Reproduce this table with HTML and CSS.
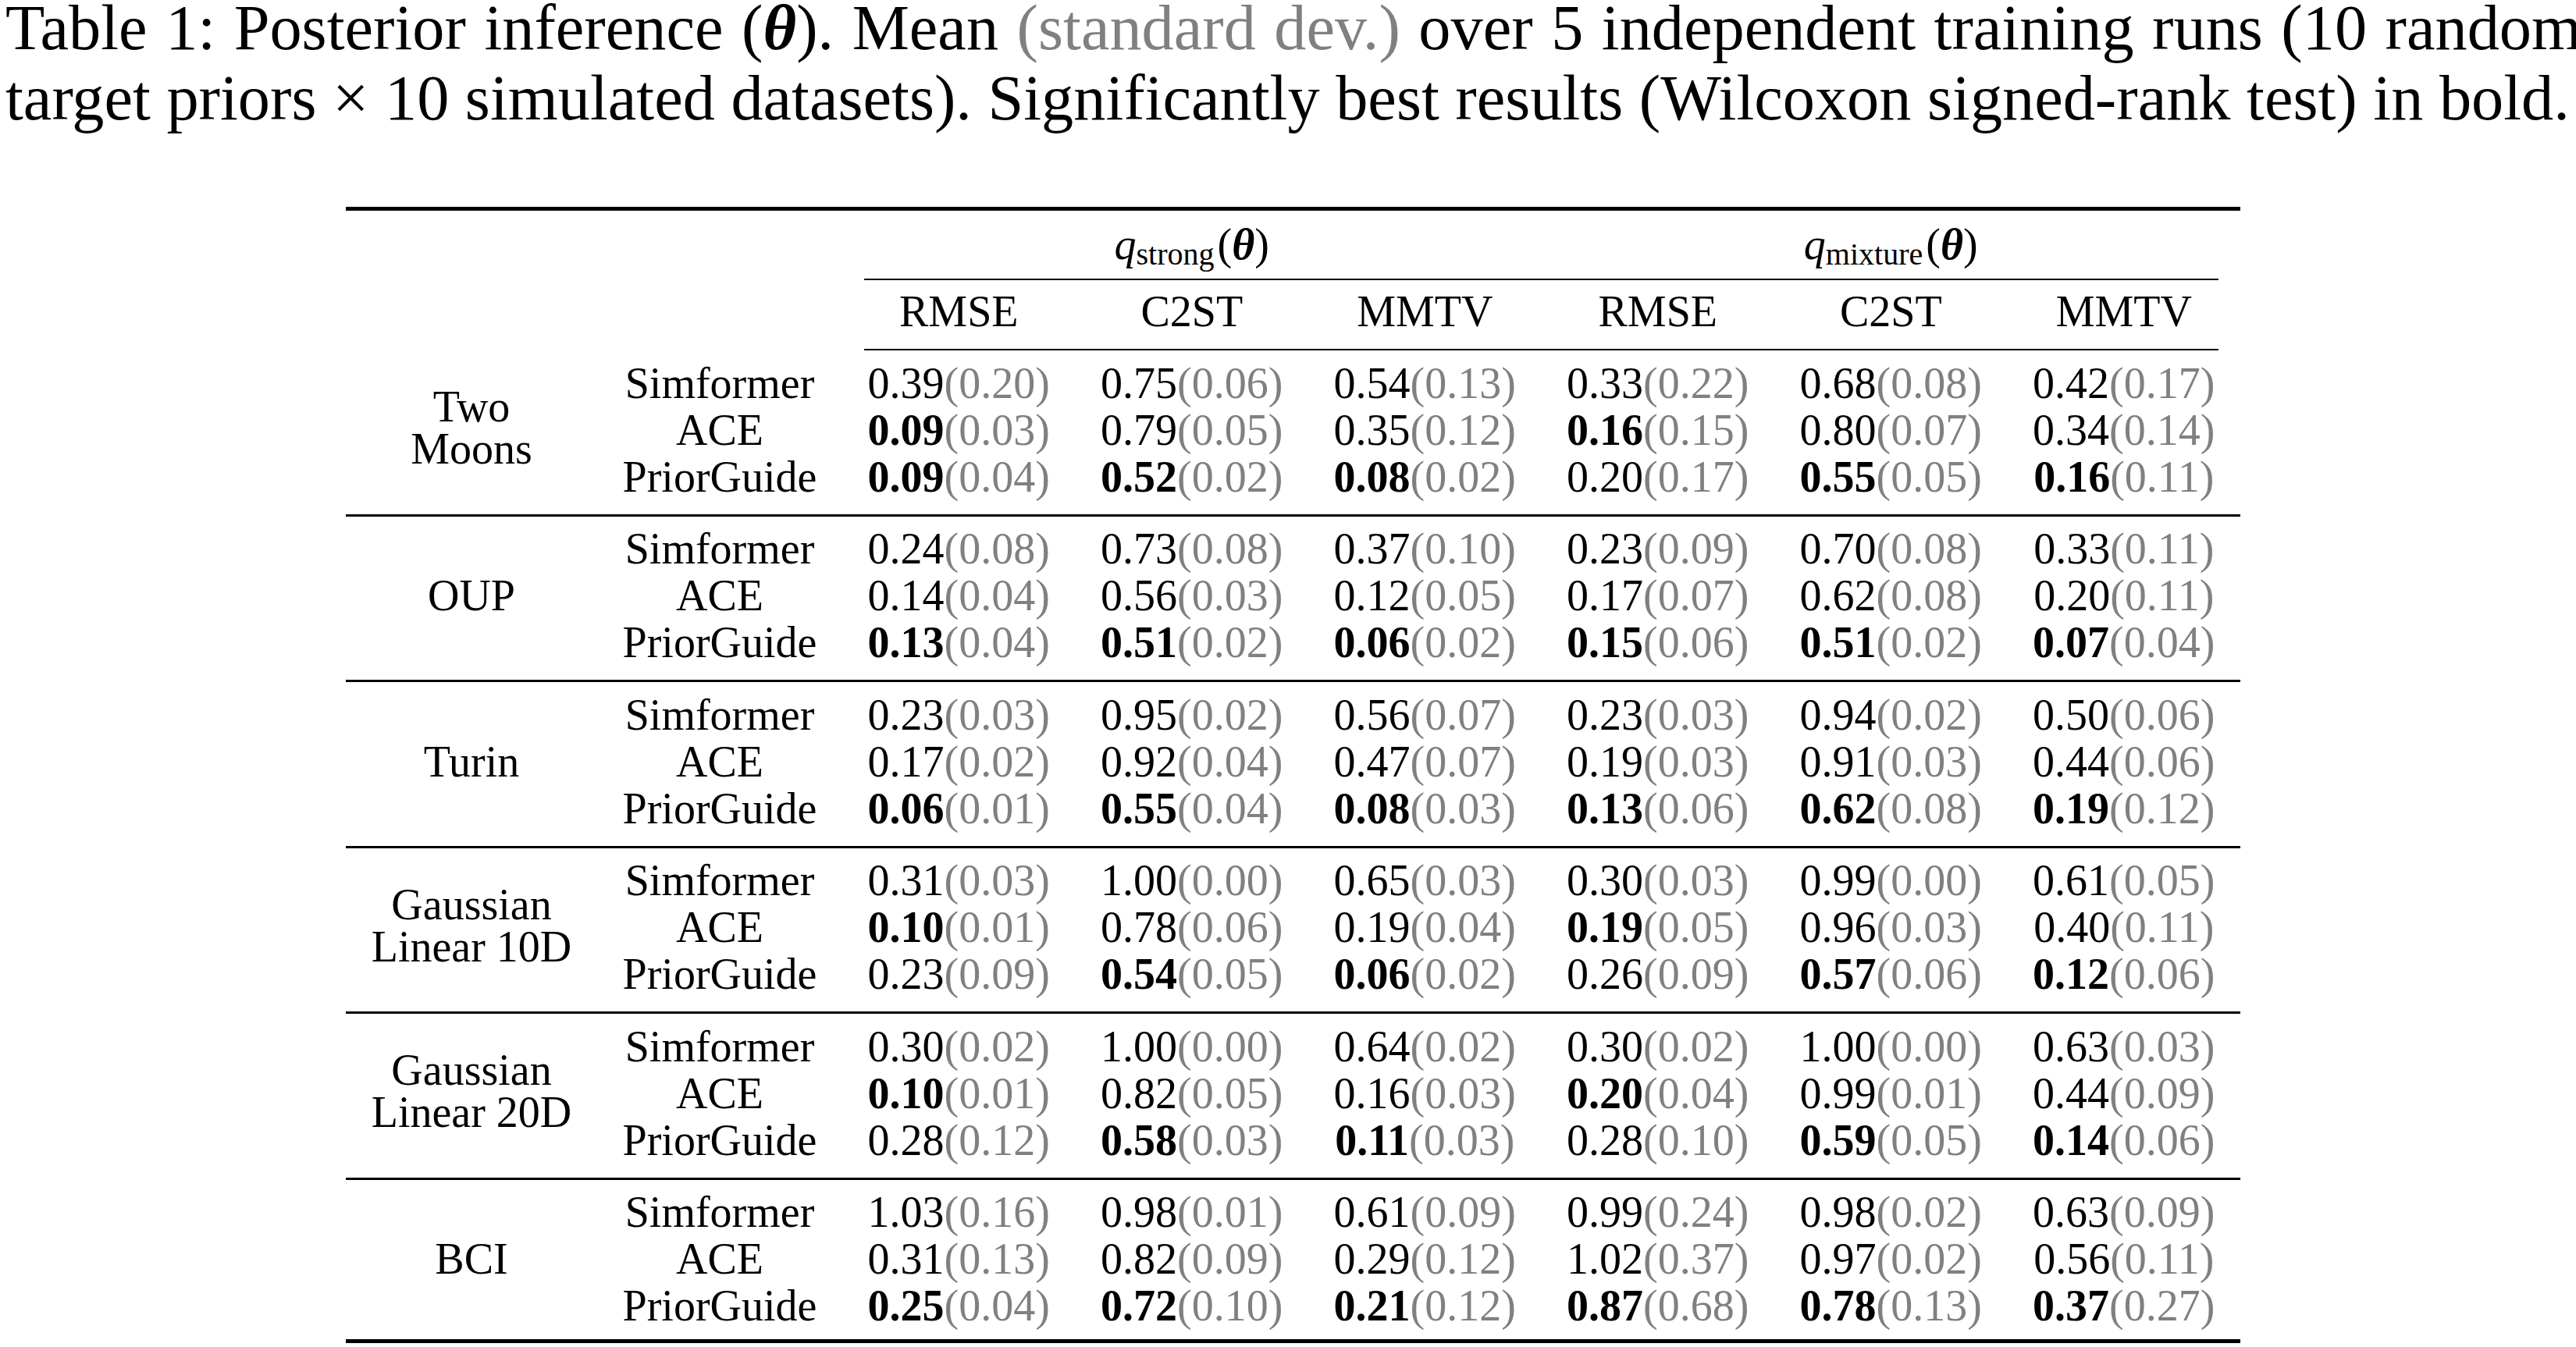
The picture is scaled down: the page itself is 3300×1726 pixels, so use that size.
FILE: index.html
```html
<!DOCTYPE html>
<html lang="en">
<head>
<meta charset="utf-8">
<title>Table 1: Posterior inference</title>
<link rel="stylesheet" href="styles.css">
</head>
<body>
<div class="caption">
  <div class="cap-line cap-first">Table 1: Posterior inference (<b class="theta">θ</b>). Mean <span class="sd">(standard dev.)</span> over 5 independent training runs (10 random</div>
  <div class="cap-line cap-second">target priors × 10 simulated datasets). Significantly best results (Wilcoxon signed-rank test) in bold.</div>
</div>

<div class="results">
  <div class="head">
    <div class="h1 blank"></div>
    <div class="h1 group g1"><i class="q">q</i><span class="sub">strong</span>(<b class="theta">θ</b>)</div>
    <div class="h1 group g2"><i class="q">q</i><span class="sub">mixture</span>(<b class="theta">θ</b>)</div>
    <div class="cmid"></div>
    <div class="h2 blank"></div>
    <div class="h2">RMSE</div><div class="h2">C2ST</div><div class="h2">MMTV</div>
    <div class="h2">RMSE</div><div class="h2">C2ST</div><div class="h2">MMTV</div>
    <div class="cmid"></div>
  </div>

  <div class="section first">
    <div class="label two-line">Two<br>Moons</div>
    <div class="m">Simformer</div>
    <div class="c">0.39<span class="sd">(0.20)</span></div><div class="c">0.75<span class="sd">(0.06)</span></div><div class="c">0.54<span class="sd">(0.13)</span></div><div class="c">0.33<span class="sd">(0.22)</span></div><div class="c">0.68<span class="sd">(0.08)</span></div><div class="c">0.42<span class="sd">(0.17)</span></div>
    <div class="m">ACE</div>
    <div class="c"><b>0.09</b><span class="sd">(0.03)</span></div><div class="c">0.79<span class="sd">(0.05)</span></div><div class="c">0.35<span class="sd">(0.12)</span></div><div class="c"><b>0.16</b><span class="sd">(0.15)</span></div><div class="c">0.80<span class="sd">(0.07)</span></div><div class="c">0.34<span class="sd">(0.14)</span></div>
    <div class="m">PriorGuide</div>
    <div class="c"><b>0.09</b><span class="sd">(0.04)</span></div><div class="c"><b>0.52</b><span class="sd">(0.02)</span></div><div class="c"><b>0.08</b><span class="sd">(0.02)</span></div><div class="c">0.20<span class="sd">(0.17)</span></div><div class="c"><b>0.55</b><span class="sd">(0.05)</span></div><div class="c"><b>0.16</b><span class="sd">(0.11)</span></div>
  </div>

  <div class="section">
    <div class="label">OUP</div>
    <div class="m">Simformer</div>
    <div class="c">0.24<span class="sd">(0.08)</span></div><div class="c">0.73<span class="sd">(0.08)</span></div><div class="c">0.37<span class="sd">(0.10)</span></div><div class="c">0.23<span class="sd">(0.09)</span></div><div class="c">0.70<span class="sd">(0.08)</span></div><div class="c">0.33<span class="sd">(0.11)</span></div>
    <div class="m">ACE</div>
    <div class="c">0.14<span class="sd">(0.04)</span></div><div class="c">0.56<span class="sd">(0.03)</span></div><div class="c">0.12<span class="sd">(0.05)</span></div><div class="c">0.17<span class="sd">(0.07)</span></div><div class="c">0.62<span class="sd">(0.08)</span></div><div class="c">0.20<span class="sd">(0.11)</span></div>
    <div class="m">PriorGuide</div>
    <div class="c"><b>0.13</b><span class="sd">(0.04)</span></div><div class="c"><b>0.51</b><span class="sd">(0.02)</span></div><div class="c"><b>0.06</b><span class="sd">(0.02)</span></div><div class="c"><b>0.15</b><span class="sd">(0.06)</span></div><div class="c"><b>0.51</b><span class="sd">(0.02)</span></div><div class="c"><b>0.07</b><span class="sd">(0.04)</span></div>
  </div>

  <div class="section">
    <div class="label">Turin</div>
    <div class="m">Simformer</div>
    <div class="c">0.23<span class="sd">(0.03)</span></div><div class="c">0.95<span class="sd">(0.02)</span></div><div class="c">0.56<span class="sd">(0.07)</span></div><div class="c">0.23<span class="sd">(0.03)</span></div><div class="c">0.94<span class="sd">(0.02)</span></div><div class="c">0.50<span class="sd">(0.06)</span></div>
    <div class="m">ACE</div>
    <div class="c">0.17<span class="sd">(0.02)</span></div><div class="c">0.92<span class="sd">(0.04)</span></div><div class="c">0.47<span class="sd">(0.07)</span></div><div class="c">0.19<span class="sd">(0.03)</span></div><div class="c">0.91<span class="sd">(0.03)</span></div><div class="c">0.44<span class="sd">(0.06)</span></div>
    <div class="m">PriorGuide</div>
    <div class="c"><b>0.06</b><span class="sd">(0.01)</span></div><div class="c"><b>0.55</b><span class="sd">(0.04)</span></div><div class="c"><b>0.08</b><span class="sd">(0.03)</span></div><div class="c"><b>0.13</b><span class="sd">(0.06)</span></div><div class="c"><b>0.62</b><span class="sd">(0.08)</span></div><div class="c"><b>0.19</b><span class="sd">(0.12)</span></div>
  </div>

  <div class="section">
    <div class="label two-line">Gaussian<br>Linear 10D</div>
    <div class="m">Simformer</div>
    <div class="c">0.31<span class="sd">(0.03)</span></div><div class="c">1.00<span class="sd">(0.00)</span></div><div class="c">0.65<span class="sd">(0.03)</span></div><div class="c">0.30<span class="sd">(0.03)</span></div><div class="c">0.99<span class="sd">(0.00)</span></div><div class="c">0.61<span class="sd">(0.05)</span></div>
    <div class="m">ACE</div>
    <div class="c"><b>0.10</b><span class="sd">(0.01)</span></div><div class="c">0.78<span class="sd">(0.06)</span></div><div class="c">0.19<span class="sd">(0.04)</span></div><div class="c"><b>0.19</b><span class="sd">(0.05)</span></div><div class="c">0.96<span class="sd">(0.03)</span></div><div class="c">0.40<span class="sd">(0.11)</span></div>
    <div class="m">PriorGuide</div>
    <div class="c">0.23<span class="sd">(0.09)</span></div><div class="c"><b>0.54</b><span class="sd">(0.05)</span></div><div class="c"><b>0.06</b><span class="sd">(0.02)</span></div><div class="c">0.26<span class="sd">(0.09)</span></div><div class="c"><b>0.57</b><span class="sd">(0.06)</span></div><div class="c"><b>0.12</b><span class="sd">(0.06)</span></div>
  </div>

  <div class="section">
    <div class="label two-line">Gaussian<br>Linear 20D</div>
    <div class="m">Simformer</div>
    <div class="c">0.30<span class="sd">(0.02)</span></div><div class="c">1.00<span class="sd">(0.00)</span></div><div class="c">0.64<span class="sd">(0.02)</span></div><div class="c">0.30<span class="sd">(0.02)</span></div><div class="c">1.00<span class="sd">(0.00)</span></div><div class="c">0.63<span class="sd">(0.03)</span></div>
    <div class="m">ACE</div>
    <div class="c"><b>0.10</b><span class="sd">(0.01)</span></div><div class="c">0.82<span class="sd">(0.05)</span></div><div class="c">0.16<span class="sd">(0.03)</span></div><div class="c"><b>0.20</b><span class="sd">(0.04)</span></div><div class="c">0.99<span class="sd">(0.01)</span></div><div class="c">0.44<span class="sd">(0.09)</span></div>
    <div class="m">PriorGuide</div>
    <div class="c">0.28<span class="sd">(0.12)</span></div><div class="c"><b>0.58</b><span class="sd">(0.03)</span></div><div class="c"><b>0.11</b><span class="sd">(0.03)</span></div><div class="c">0.28<span class="sd">(0.10)</span></div><div class="c"><b>0.59</b><span class="sd">(0.05)</span></div><div class="c"><b>0.14</b><span class="sd">(0.06)</span></div>
  </div>

  <div class="section last">
    <div class="label">BCI</div>
    <div class="m">Simformer</div>
    <div class="c">1.03<span class="sd">(0.16)</span></div><div class="c">0.98<span class="sd">(0.01)</span></div><div class="c">0.61<span class="sd">(0.09)</span></div><div class="c">0.99<span class="sd">(0.24)</span></div><div class="c">0.98<span class="sd">(0.02)</span></div><div class="c">0.63<span class="sd">(0.09)</span></div>
    <div class="m">ACE</div>
    <div class="c">0.31<span class="sd">(0.13)</span></div><div class="c">0.82<span class="sd">(0.09)</span></div><div class="c">0.29<span class="sd">(0.12)</span></div><div class="c">1.02<span class="sd">(0.37)</span></div><div class="c">0.97<span class="sd">(0.02)</span></div><div class="c">0.56<span class="sd">(0.11)</span></div>
    <div class="m">PriorGuide</div>
    <div class="c"><b>0.25</b><span class="sd">(0.04)</span></div><div class="c"><b>0.72</b><span class="sd">(0.10)</span></div><div class="c"><b>0.21</b><span class="sd">(0.12)</span></div><div class="c"><b>0.87</b><span class="sd">(0.68)</span></div><div class="c"><b>0.78</b><span class="sd">(0.13)</span></div><div class="c"><b>0.37</b><span class="sd">(0.27)</span></div>
  </div>
</div>
</body>
</html>
```

FILE: styles.css
```css
html, body {
  margin: 0;
  padding: 0;
  background: #ffffff;
  overflow: hidden;
}

body {
  font-family: "Liberation Serif", "Times New Roman", serif;
  color: #000000;
}

.sd {
  color: #808080;
}

.theta {
  font-style: italic;
  font-weight: bold;
}

/* ---------- caption ---------- */
.caption {
  padding-left: 7px;
  width: 3300px;
  font-size: 82.3px;
  white-space: nowrap;
}

.cap-first {
  line-height: 71px;
  white-space: normal;
  text-align: justify;
  text-align-last: justify;
}

.cap-second {
  line-height: 109px;
}

/* ---------- table ---------- */
.results {
  --cols: 322px 314px repeat(6, 298.5px);
  width: 2427px;
  margin: 85px 0 0 443px;
  border-top: 5px solid #000000;
  border-bottom: 5px solid #000000;
  font-size: 56px;
  line-height: 60px;
}

.head {
  display: grid;
  grid-template-columns: var(--cols);
  text-align: center;
}

.h1 {
  padding: 13px 0 14px;
  height: 60px;
}

.h1.blank { grid-column: 1 / 3; }
.g1 { grid-column: 3 / 6; }
.g2 { grid-column: 6 / 9; }

.q {
  font-style: italic;
}

.sub {
  font-size: 40px;
  line-height: 0;
  vertical-align: -7px;
  margin-right: 4px;
}

.cmid {
  grid-column: 3 / 9;
  margin: 0 28px;
  height: 2px;
  background: #000000;
}

.h2 {
  padding: 10px 0 18px;
  height: 60px;
}

.h2.blank { grid-column: 1 / 3; }

.section {
  display: grid;
  grid-template-columns: var(--cols);
  grid-template-rows: repeat(3, 60px);
  padding: 11.5px 0 18px;
  border-top: 3px solid #000000;
  text-align: center;
  white-space: nowrap;
}

.section.first {
  border-top: none;
}

.section.last {
  padding-bottom: 13px;
}

.label {
  grid-column: 1;
  grid-row: 1 / 4;
  align-self: center;
}

.label.two-line {
  line-height: 54px;
  padding-bottom: 5px;
}
```
